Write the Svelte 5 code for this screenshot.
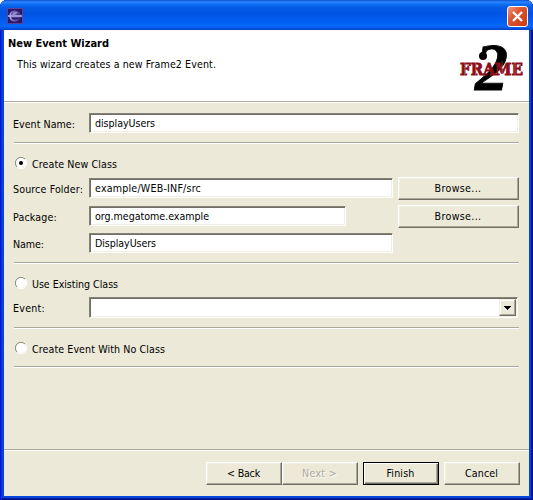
<script>
  let eventName = $state('displayUsers');
  let mode = $state('new');
  let folder = $state('example/WEB-INF/src');
  let pkg = $state('org.megatome.example');
  let className = $state('DisplayUsers');

  // Tracks a label out (or in) so that it fills the given width.
  function fit(node, width) {
    const natural = node.getBoundingClientRect().width;
    const count = node.textContent.length;
    node.style.letterSpacing = (width - natural) / count + 'px';
  }
</script>

{#snippet label(text, width)}
  <span class="text" use:fit={width}>{text}</span>
{/snippet}

{#snippet radio(value, text, width)}
  <button class="option" onclick={() => (mode = value)}>
    <svg width="12" height="12" viewBox="0 0 12 12">
      <circle cx="6" cy="6" r="5" fill="#fff" />
      <path d="M2 10A5.5 5.5 0 0 1 10 2" fill="none" stroke="#8c8a7b" stroke-width="1" />
      <path d="M2 10A5.5 5.5 0 0 0 10 2" fill="none" stroke="#fff" stroke-width="1" />
      {#if mode === value}<circle cx="6" cy="6" r="2" fill="#000" />{/if}
    </svg>
    {@render label(text, width)}
  </button>
{/snippet}

<div class="window">
  <header class="titlebar">
    <svg class="app" width="16" height="16" viewBox="0 0 16 16">
      <rect width="16" height="16" fill="#2c1765" />
      <rect x=".5" y=".5" width="15" height="15" fill="none" stroke="#5943a0" />
      <circle cx="7.5" cy="8" r="5.5" fill="#7770bd" />
      <path d="M5 3.5a5.5 5.5 0 0 0 0 9 7 7 0 0 1 0-9" fill="#c5c3ef" />
      <circle cx="9" cy="8" r="4.8" fill="#4a3f92" />
      <path d="M6 4.5a4.8 4.8 0 0 1 5 0L8 7H5z" fill="#8d88c8" />
      <path d="M5 10.5h8" stroke="#2a1c66" />
      <path d="M1 8h14" stroke="#b9b4eb" stroke-width="1.3" />
    </svg>
    <button class="close" aria-label="Close">
      <svg width="21" height="21" viewBox="0 0 21 21">
        <path d="M6 6l9 9M15 6l-9 9" stroke="#fff" stroke-width="2.3" />
      </svg>
    </button>
  </header>

  <main>
    <section class="banner">
      <div>
        <h1>{@render label('New Event Wizard', 101)}</h1>
        <p>{@render label('This wizard creates a new Frame2 Event.', 199)}</p>
      </div>
      <svg class="logo" width="70" height="61" viewBox="0 0 70 61">
        <text x="17" y="49.5" class="two" textLength="33" lengthAdjust="spacingAndGlyphs">2</text>
        <circle cx="25" cy="16" r="4" />
        <text x="2" y="35" class="frame" textLength="63" lengthAdjust="spacingAndGlyphs">FRAME</text>
        <path d="M6.9 21v15M17.7 21v15M44.2 21v15M57 21v15" stroke="#fff" stroke-width=".6" opacity=".45" />
      </svg>
    </section>
    <div class="rule full"></div>

    <form class="body" onsubmit={(e) => e.preventDefault()}>
      <div class="row">
        <span class="name">{@render label('Event Name:', 62)}</span>
        <div class="field wide">{@render label(eventName, 60)}</div>
      </div>
      <div class="rule r1"></div>

      {@render radio('new', 'Create New Class', 85)}
      <div class="row source">
        <span class="name">{@render label('Source Folder:', 70)}</span>
        <div class="field mid">{@render label(folder, 106)}</div>
        <button class="btn browse">{@render label('Browse...', 47)}</button>
      </div>
      <div class="row package">
        <span class="name">{@render label('Package:', 44)}</span>
        <div class="field short">{@render label(pkg, 114)}</div>
        <button class="btn browse">{@render label('Browse...', 47)}</button>
      </div>
      <div class="row classname">
        <span class="name">{@render label('Name:', 31)}</span>
        <div class="field mid">{@render label(className, 61)}</div>
      </div>
      <div class="rule r2"></div>

      {@render radio('existing', 'Use Existing Class', 86)}
      <div class="row event">
        <span class="name">{@render label('Event:', 32)}</span>
        <div class="field combo">
          <span class="arrow">
            <svg width="7" height="4" viewBox="0 0 7 4" shape-rendering="crispEdges">
              <path d="M0 0h7v1H6v1H5v1H4v1H3V3H2V2H1V1H0z" />
            </svg>
          </span>
        </div>
      </div>
      <div class="rule r3"></div>

      {@render radio('none', 'Create Event With No Class', 133)}
      <div class="rule r4"></div>
    </form>

    <div class="rule full"></div>
    <footer>
      <button class="btn">{@render label('< Back', 33)}</button>
      <button class="btn off" disabled>{@render label('Next >', 35)}</button>
      <button class="btn default">{@render label('Finish', 28)}</button>
      <button class="btn cancel">{@render label('Cancel', 33)}</button>
    </footer>
  </main>
</div>

<style>
  :global(body) { margin: 0; background: #fff; }
  .window {
    box-sizing: border-box;
    width: 533px;
    height: 500px;
    padding: 0 4px 4px;
    display: flex;
    flex-direction: column;
    border-radius: 7px 7px 0 0;
    background: #0644dc;
    box-shadow: inset 1px 0 #0019cf, inset 2px 0 #0831d9, inset -1px 0 #00138c, inset -2px 0 #001ea0,
      inset 0 -1px #00138c, inset 0 -2px #001ea0;
    font: 10.6px/14px "DejaVu Sans Condensed", "DejaVu Sans", sans-serif;
    color: #000;
    overflow: hidden;
  }
  .titlebar {
    height: 30px;
    margin: 0 -4px;
    padding: 0 5px 0 7px;
    box-sizing: border-box;
    display: flex;
    align-items: center;
    justify-content: space-between;
    flex: none;
    background: linear-gradient(#0b51d2 0, #2c86fb 2px, #1070f5 4px, #0459e4 8px, #0054e3 14px, #0260f4 22px, #0668fc 26px, #0458e6 28px, #003fc6 30px);
  }
  .app { margin-top: 2px; }
  .close {
    width: 21px;
    height: 21px;
    margin-top: 3px;
    padding: 0;
    border: 1px solid #fff;
    border-radius: 3px;
    background: linear-gradient(135deg, #ee9680, #dc5431 40%, #c83a12);
  }
  .close svg { display: block; margin: -1px; }
  main { flex: 1; display: flex; flex-direction: column; background: #ece9d8; }
  .banner { height: 71px; display: flex; justify-content: space-between; background: #fff; flex: none; }
  h1 { margin: 7px 0 0 4px; font-size: 11px; line-height: 14px; }
  p { margin: 6px 0 0 13px; }
  .text { display: inline-block; white-space: pre; }
  .logo { margin: 10px 1px 0 0; overflow: visible; }
  .two { font: italic bold 68px "Liberation Serif", serif; stroke: #000; stroke-width: .8; }
  .frame { font: bold 17.5px "DejaVu Serif", serif; fill: #8c0d16; stroke: #8c0d16; stroke-width: .9; }
  .rule { height: 1px; border-bottom: 1px solid #fff; background: #aca899; flex: none; }
  .body { flex: 1; padding: 10px 10px 0; display: flex; flex-direction: column; }
  .row { display: flex; align-items: flex-start; height: 20px; }
  .name { width: 76px; margin-left: -1px; box-sizing: border-box; padding-top: 4px; flex: none; }
  .field {
    box-sizing: border-box;
    height: 20px;
    padding: 2px 0 0 5px;
    border: 1px solid;
    border-color: #848277 #fff #fff #848277;
    box-shadow: inset 1px 1px #716f64, inset -1px -1px #f1efe2;
    background: #fff;
    line-height: 15px;
    flex: none;
  }
  .wide { width: 430px; }
  .mid { width: 304px; }
  .short { width: 257px; }
  .combo { width: 429px; height: 21px; display: flex; justify-content: flex-end; padding: 1px; }
  .arrow {
    box-sizing: border-box;
    width: 17px;
    height: 17px;
    display: flex;
    align-items: center;
    justify-content: center;
    background: #ece9d8;
    border: 1px solid;
    border-color: #f1efe2 #716f64 #716f64 #f1efe2;
    box-shadow: inset -1px -1px #aca899, inset 1px 1px #fff;
  }
  .option {
    height: 16px;
    margin: 0;
    padding: 0 0 0 1px;
    display: flex;
    align-items: center;
    align-self: flex-start;
    gap: 5px;
    border: 0;
    background: none;
    color: inherit;
    font: inherit;
  }
  .option .text { margin-top: 2px; }
  .btn {
    box-sizing: border-box;
    width: 76px;
    height: 23px;
    padding: 0 1px 1px 0;
    background: #ece9d8;
    border: 1px solid;
    border-color: #fff #716f64 #716f64 #fff;
    box-shadow: inset -1px -1px #aca899, inset 1px 1px #f1efe2;
    color: #000;
    font: inherit;
    flex: none;
  }
  .browse { width: 121px; margin-top: -1px; }
  .mid + .browse { margin-left: 5px; }
  .short + .browse { margin-left: 52px; }
  .r1 { margin: 9px 0 11px; }
  .source { margin-top: 7px; }
  .package { margin-top: 8px; }
  .classname { margin-top: 7px; }
  .r2 { margin: 9px 0 11px; }
  .event { margin-top: 6px; }
  .r3 { margin: 10px 0 11px; }
  .r4 { margin-top: 10px; }
  footer { height: 45px; padding: 11px 9px 0 0; box-sizing: border-box; display: flex; justify-content: flex-end; flex: none; }
  .off { color: #aca899; text-shadow: 1px 1px #fff; }
  .default { margin-left: 5px; border-color: #000; box-shadow: inset 1px 1px #fff, inset -1px -1px #716f64, inset -2px -2px #aca899; }
  .cancel { margin-left: 5px; }
</style>
